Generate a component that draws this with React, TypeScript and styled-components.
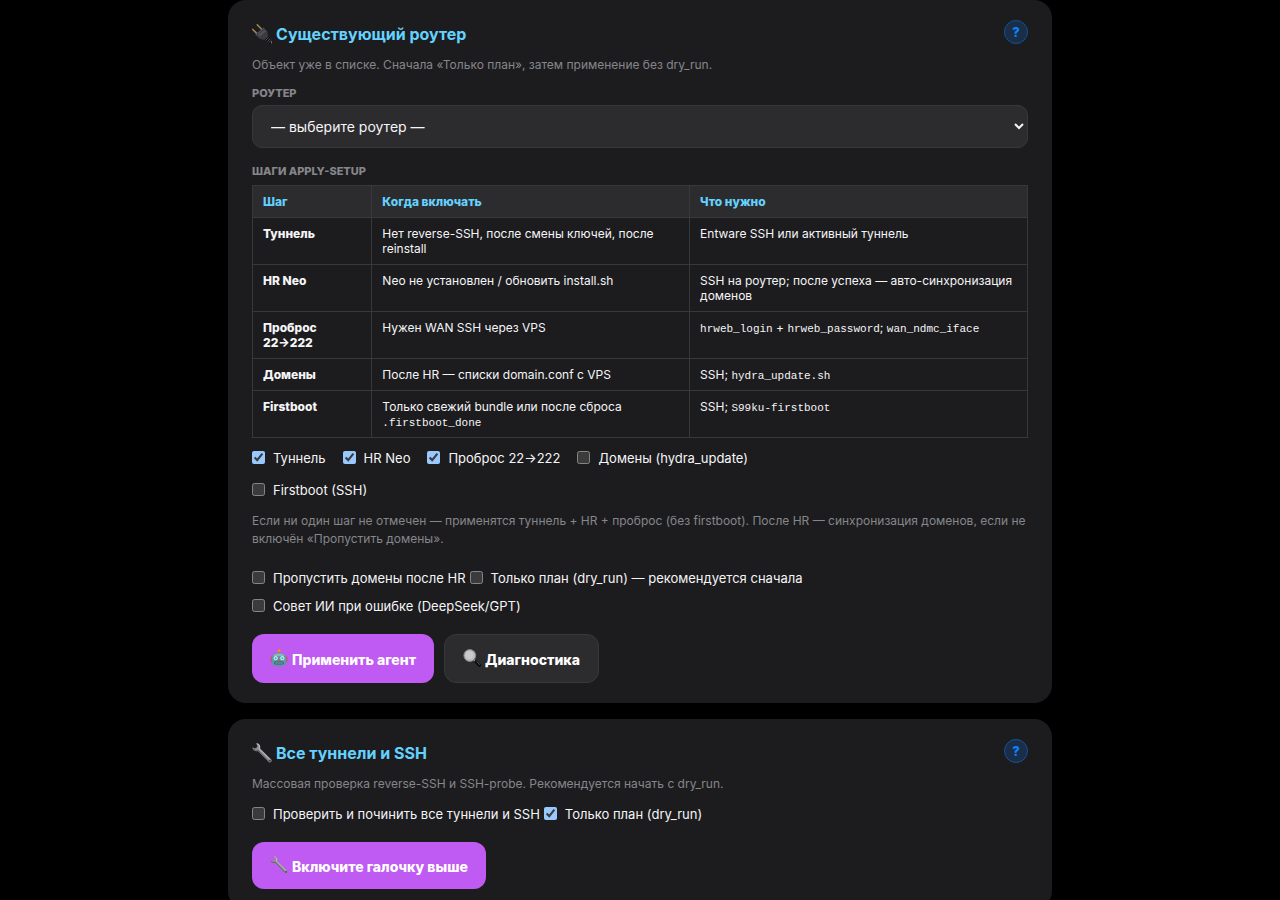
import React, { useState } from "react";
import styled, { createGlobalStyle, css } from "styled-components";

const GlobalStyle = createGlobalStyle`
  :root { color-scheme: dark; }
  * { box-sizing: border-box; }
  body {
    margin: 0;
    background: #000;
    color: #f5f5f7;
    font-family: Inter, "Liberation Sans", sans-serif;
    font-size: 13px;
  }
`;

const Page = styled.main`
  display: flex;
  flex-direction: column;
  gap: 16px;
  max-width: 824px;
  margin: 0 auto;
`;

const Card = styled.section`
  padding: 20px 24px;
  background: #1c1c1e;
  border-radius: 18px;
`;

const CardHead = styled.header`
  display: flex;
  align-items: flex-start;
  justify-content: space-between;
  height: 36px;
`;

const CardTitle = styled.h2`
  display: flex;
  align-items: center;
  gap: 4px;
  margin: 0;
  font-size: 16px;
  line-height: 28px;
  font-weight: 700;
  color: #64d2ff;
`;

const HelpButton = styled.button`
  width: 24px;
  height: 24px;
  padding: 0;
  border: 1px solid #0f539b;
  border-radius: 50%;
  background: #1a2f47;
  color: #0a84ff;
  font: 800 13px/22px Inter, sans-serif;
  text-align: center;
`;

const Hint = styled.p`
  margin: 0;
  font-size: 12px;
  line-height: 18px;
  color: #86868b;
`;

const fieldCaption = css`
  display: block;
  font-size: 11px;
  line-height: 14px;
  font-weight: 800;
  text-transform: uppercase;
  text-align: left;
  color: #86868b;
`;

const FieldLabel = styled.label`
  ${fieldCaption}
  margin: 12px 0 5px;
`;

const RouterSelect = styled.select`
  display: block;
  width: 100%;
  height: 43px;
  padding: 0 14px;
  border: 1px solid #38383a;
  border-radius: 10px;
  background: #2c2c2e;
  color: #f5f5f7;
  font: 400 14px Inter, sans-serif;
`;

const TableCaption = styled.h3`
  ${fieldCaption}
  margin: 16px 0 7px;
`;

const StepsTable = styled.table`
  width: 100%;
  table-layout: fixed;
  border-collapse: collapse;
  font-size: 12px;
  line-height: 15px;

  th,
  td {
    padding: 8px 10px;
    border: 1px solid #38383a;
    text-align: left;
    vertical-align: top;
  }
  th {
    font-weight: 800;
  }
  thead th {
    background: #2c2c2e;
    color: #64d2ff;
  }
  code {
    font: 11px/10px "Liberation Mono", monospace;
  }
`;

const StepCol = styled.col<{ $width: number }>`
  width: ${(p) => p.$width}%;
`;

const StepChecks = styled.div`
  display: flex;
  flex-wrap: wrap;
  column-gap: 17px;
  max-width: 560px;
  padding: 4px 0 6px;
`;

const OptionChecks = styled.div<{ $top: number }>`
  display: flex;
  flex-wrap: wrap;
  column-gap: 4px;
  padding: ${(p) => p.$top}px 0 14px;
`;

const CheckLabel = styled.label<{ $row: number }>`
  display: flex;
  align-items: center;
  gap: 8px;
  font-size: 13px;
  line-height: ${(p) => p.$row}px;

  input {
    width: 13px;
    height: 13px;
    margin: 0 0 2px;
  }
`;

const Actions = styled.div`
  display: flex;
  gap: 10px;
`;

const ActionButton = styled.button<{ $secondary?: boolean }>`
  display: flex;
  align-items: center;
  gap: 4px;
  padding: 16px 18px 14px;
  border: ${(p) => (p.$secondary ? "1px solid #38383a" : "0")};
  border-radius: 12px;
  background: ${(p) => (p.$secondary ? "#2c2c2e" : "#bf5af2")};
  color: #fff;
  font: 800 14px/17px Inter, sans-serif;

  svg {
    margin: -4px 0 0;
  }
`;

const Glyph = styled.svg<{ $size: number }>`
  flex: none;
  width: ${(p) => p.$size}px;
  height: ${(p) => p.$size}px;
`;

function PlugIcon() {
  return (
    <Glyph $size={20} viewBox="0 0 20 20" fill="none" aria-hidden="true">
      <path d="M.8 5.400 5 9.800M5.200.8l4.400 4.400" stroke="#a98a52" strokeWidth="1.500" strokeLinecap="round" />
      <path d="m3.200 10.400 8.400-7 1.200 1.400-8.200 7.200z" fill="#4c4e51" />
      <path d="m4.600 11.600 8-6.800 2.600 2.200 1 6.400-3 2.800-6.200-1.600z" fill="#3a3c3f" />
      <path d="m6 11 6.600-5.400 1.600 1.500-6.600 5.600z" fill="#505256" />
      <path d="m12.700 15.800 3.300-3 3.900 4.200v3h-2.400z" fill="#0d0d0f" />
      <path d="m13.600 16.400 3-2.900m-1.500 4.200 3-2.900m-1.600 4.200 2.900-2.800" stroke="#66686c" strokeWidth=".8" />
      <path d="M19.500 17.200v2.400" stroke="#85878b" strokeWidth=".8" />
    </Glyph>
  );
}

function WrenchIcon({ size }: { size: number }) {
  return (
    <Glyph $size={size} viewBox="0 0 20 20" fill="none" aria-hidden="true">
      <path
        d="M4 .4c2.400-.3 4.300 1.400 4.300 3.500l-.2 1.700 11.400 11.200c1 1.300-1 3.500-2.500 2.500L5.900 7.900C3.500 8.800.6 7.200.4 4.200l2.400 1.300 2.300-1.200.2-2z"
        fill="#918e96"
      />
      <path d="M5 .9c1.800.3 2.800 1.600 2.500 3.400l-.3 1.500 10.900 10.700" stroke="#c9c6cd" strokeWidth=".9" />
      <path d="M1 5.500c1 1.600 3 2 5 1.500l10.800 11.300" stroke="#57525a" strokeWidth=".8" />
      <circle cx="17.900" cy="17.700" r=".9" fill="#3a3338" />
    </Glyph>
  );
}

function RobotIcon() {
  return (
    <Glyph $size={18} viewBox="0 0 18 18" fill="none" aria-hidden="true">
      <path d="M9 2v3.500" stroke="#a4654a" strokeWidth="1.600" />
      <circle cx="9" cy="1.700" r="1.600" fill="#f08a24" />
      <rect x=".5" y="7.500" width="3" height="5.500" rx="1.200" fill="#c95755" />
      <rect x="14.500" y="7.500" width="3" height="5.500" rx="1.200" fill="#c95755" />
      <path d="M1.800 9.500C1.800 5.600 4.600 3.800 9 3.800s7.200 1.800 7.200 5.700v4.300c0 2.600-2.400 3.900-7.200 3.900s-7.200-1.300-7.200-3.900z" fill="#6297a7" />
      <path d="M3.500 7C4.600 5.200 6.400 4.500 9 4.500s4.400.7 5.500 2.500z" fill="#91b5bf" />
      <circle cx="5.700" cy="9.200" r="2.100" fill="#b2f1f6" />
      <circle cx="12.300" cy="9.200" r="2.100" fill="#b2f1f6" />
      <circle cx="5.700" cy="9.200" r="1" fill="#59a8b5" />
      <circle cx="12.300" cy="9.200" r="1" fill="#59a8b5" />
      <path d="m9 9.400 1.300 2.300H7.700z" fill="#e34b3c" />
      <rect x="4.300" y="12.500" width="9.400" height="3" rx="1.300" fill="#345e70" />
      <path d="M5.500 14h7" stroke="#a6ccd2" strokeWidth="1.100" strokeDasharray="1.300 .6" />
    </Glyph>
  );
}

function MagnifierIcon() {
  return (
    <Glyph $size={18} viewBox="0 0 18 18" fill="none" aria-hidden="true">
      <path d="m10.800 10.800 2.200 2" stroke="#9c9ea0" strokeWidth="1.800" />
      <path d="m12.800 12.700 3.700 3.600" stroke="#0c0c0e" strokeWidth="3" strokeLinecap="round" />
      <path d="m13.500 12.400 3.400 3.300" stroke="#6c6e71" strokeWidth=".8" />
      <circle cx="6.800" cy="6.500" r="5.900" fill="#b9bbbc" stroke="#85888b" strokeWidth="1" />
      <circle cx="6.500" cy="6.100" r="4.200" fill="#c9cacb" />
    </Glyph>
  );
}

interface CheckProps {
  text: string;
  checked?: boolean;
  row?: number;
}

function Check({ text, checked = false, row = 28 }: CheckProps) {
  const [on, setOn] = useState(checked);
  return (
    <CheckLabel $row={row}>
      <input type="checkbox" checked={on} onChange={(e) => setOn(e.target.checked)} />
      {text}
    </CheckLabel>
  );
}

const steps: { name: string; when: React.ReactNode; needs: React.ReactNode }[] = [
  {
    name: "Туннель",
    when: "Нет reverse-SSH, после смены ключей, после reinstall",
    needs: "Entware SSH или активный туннель",
  },
  {
    name: "HR Neo",
    when: "Neo не установлен / обновить install.sh",
    needs: "SSH на роутер; после успеха — авто-синхронизация доменов",
  },
  {
    name: "Проброс 22→222",
    when: "Нужен WAN SSH через VPS",
    needs: (
      <>
        <code>hrweb_login</code> + <code>hrweb_password</code>; <code>wan_ndmc_iface</code>
      </>
    ),
  },
  {
    name: "Домены",
    when: "После HR — списки domain.conf с VPS",
    needs: (
      <>
        SSH; <code>hydra_update.sh</code>
      </>
    ),
  },
  {
    name: "Firstboot",
    when: (
      <>
        Только свежий bundle или после сброса <code>.firstboot_done</code>
      </>
    ),
    needs: (
      <>
        SSH; <code>S99ku-firstboot</code>
      </>
    ),
  },
];

export default function App() {
  return (
    <>
      <GlobalStyle />
      <Page>
        <Card>
          <CardHead>
            <CardTitle>
              <PlugIcon />
              Существующий роутер
            </CardTitle>
            <HelpButton type="button">?</HelpButton>
          </CardHead>
          <Hint>Объект уже в списке. Сначала «Только план», затем применение без dry_run.</Hint>
          <FieldLabel htmlFor="router">Роутер</FieldLabel>
          <RouterSelect id="router">
            <option>— выберите роутер —</option>
          </RouterSelect>
          <TableCaption id="steps-title">Шаги apply-setup</TableCaption>
          <StepsTable aria-labelledby="steps-title">
            <colgroup>
              <StepCol $width={15.4} />
              <StepCol $width={41} />
              <StepCol $width={43.6} />
            </colgroup>
            <thead>
              <tr>
                <th scope="col">Шаг</th>
                <th scope="col">Когда включать</th>
                <th scope="col">Что нужно</th>
              </tr>
            </thead>
            <tbody>
              {steps.map((step) => (
                <tr key={step.name}>
                  <th scope="row">{step.name}</th>
                  <td>{step.when}</td>
                  <td>{step.needs}</td>
                </tr>
              ))}
            </tbody>
          </StepsTable>
          <StepChecks>
            <Check row={32} text="Туннель" checked />
            <Check row={32} text="HR Neo" checked />
            <Check row={32} text="Проброс 22→222" checked />
            <Check row={32} text="Домены (hydra_update)" />
            <Check row={32} text="Firstboot (SSH)" />
          </StepChecks>
          <Hint>
            Если ни один шаг не отмечен — применятся туннель + HR + проброс (без firstboot). После HR —
            синхронизация доменов, если не включён «Пропустить домены».
          </Hint>
          <OptionChecks $top={16}>
            <Check text="Пропустить домены после HR" />
            <Check text="Только план (dry_run) — рекомендуется сначала" />
            <Check text="Совет ИИ при ошибке (DeepSeek/GPT)" />
          </OptionChecks>
          <Actions>
            <ActionButton type="button">
              <RobotIcon />
              Применить агент
            </ActionButton>
            <ActionButton type="button" $secondary>
              <MagnifierIcon />
              Диагностика
            </ActionButton>
          </Actions>
        </Card>
        <Card>
          <CardHead>
            <CardTitle>
              <WrenchIcon size={20} />
              Все туннели и SSH
            </CardTitle>
            <HelpButton type="button">?</HelpButton>
          </CardHead>
          <Hint>Массовая проверка reverse-SSH и SSH-probe. Рекомендуется начать с dry_run.</Hint>
          <OptionChecks $top={7}>
            <Check text="Проверить и починить все туннели и SSH" />
            <Check text="Только план (dry_run)" checked />
          </OptionChecks>
          <Actions>
            <ActionButton type="button">
              <WrenchIcon size={18} />
              Включите галочку выше
            </ActionButton>
          </Actions>
        </Card>
      </Page>
    </>
  );
}
